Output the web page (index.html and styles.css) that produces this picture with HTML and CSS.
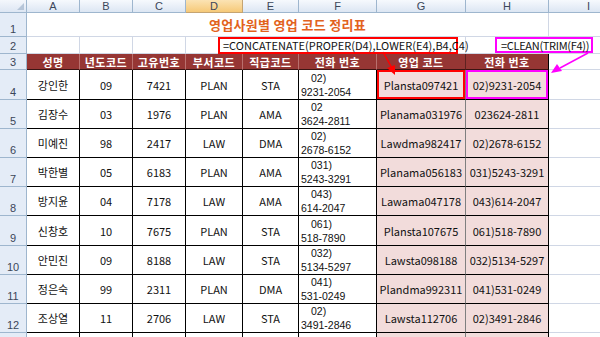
FILE: index.html
```html
<!DOCTYPE html>
<html>
<head>
	<title>영업사원별 영업 코드 정리표</title>
	<meta charset="utf-8">
	<link rel="stylesheet" href="styles.css">
</head>
<body>

	<div id="page">

		<div class="sheet">

			<!-- column headers -->
			<div class="corner"><span class="corner-tri"></span></div>
			<div class="colhead">A</div>
			<div class="colhead">B</div>
			<div class="colhead">C</div>
			<div class="colhead sel">D</div>
			<div class="colhead">E</div>
			<div class="colhead">F</div>
			<div class="colhead">G</div>
			<div class="colhead">H</div>
			<div class="colhead">I</div>

			<!-- row 1 -->
			<div class="rowhead">1</div>
			<div class="title">영업사원별 영업 코드 정리표</div>
			<div class="cell"></div>

			<!-- row 2 -->
			<div class="rowhead">2</div>
			<div class="cell"></div>
			<div class="cell"></div>
			<div class="cell"></div>
			<div class="cell"></div>
			<div class="cell"></div>
			<div class="cell"></div>
			<div class="cell"></div>
			<div class="cell"></div>
			<div class="cell"></div>

			<!-- row 3 -->
			<div class="rowhead">3</div>
			<div class="th">성명</div>
			<div class="th">년도코드</div>
			<div class="th">고유번호</div>
			<div class="th">부서코드</div>
			<div class="th">직급코드</div>
			<div class="th">전화 번호</div>
			<div class="th th-g">영업 코드</div>
			<div class="th th-last">전화 번호</div>
			<div class="cell"></div>

			<!-- row 4 -->
			<div class="rowhead">4</div>
			<div class="td">강인한</div>
			<div class="td">09</div>
			<div class="td">7421</div>
			<div class="td">PLAN</div>
			<div class="td">STA</div>
			<div class="td tel"><span class="area">02)</span><span>9231-2054</span></div>
			<div class="td code hl-red">Plansta097421</div>
			<div class="td code code-h hl-pink">02)9231-2054</div>
			<div class="cell"></div>

			<!-- row 5 -->
			<div class="rowhead">5</div>
			<div class="td">김장수</div>
			<div class="td">03</div>
			<div class="td">1976</div>
			<div class="td">PLAN</div>
			<div class="td">AMA</div>
			<div class="td tel"><span class="area">02</span><span>3624-2811</span></div>
			<div class="td code">Planama031976</div>
			<div class="td code code-h">023624-2811</div>
			<div class="cell"></div>

			<!-- row 6 -->
			<div class="rowhead">6</div>
			<div class="td">미예진</div>
			<div class="td">98</div>
			<div class="td">2417</div>
			<div class="td">LAW</div>
			<div class="td">DMA</div>
			<div class="td tel"><span class="area">02)</span><span>2678-6152</span></div>
			<div class="td code">Lawdma982417</div>
			<div class="td code code-h">02)2678-6152</div>
			<div class="cell"></div>

			<!-- row 7 -->
			<div class="rowhead">7</div>
			<div class="td">박한별</div>
			<div class="td">05</div>
			<div class="td">6183</div>
			<div class="td">PLAN</div>
			<div class="td">AMA</div>
			<div class="td tel"><span class="area">031)</span><span>5243-3291</span></div>
			<div class="td code">Planama056183</div>
			<div class="td code code-h">031)5243-3291</div>
			<div class="cell"></div>

			<!-- row 8 -->
			<div class="rowhead">8</div>
			<div class="td">방지윤</div>
			<div class="td">04</div>
			<div class="td">7178</div>
			<div class="td">LAW</div>
			<div class="td">AMA</div>
			<div class="td tel"><span class="area">043)</span><span>614-2047</span></div>
			<div class="td code">Lawama047178</div>
			<div class="td code code-h">043)614-2047</div>
			<div class="cell"></div>

			<!-- row 9 -->
			<div class="rowhead">9</div>
			<div class="td">신창호</div>
			<div class="td">10</div>
			<div class="td">7675</div>
			<div class="td">PLAN</div>
			<div class="td">STA</div>
			<div class="td tel"><span class="area">061)</span><span>518-7890</span></div>
			<div class="td code">Plansta107675</div>
			<div class="td code code-h">061)518-7890</div>
			<div class="cell"></div>

			<!-- row 10 -->
			<div class="rowhead">10</div>
			<div class="td">안민진</div>
			<div class="td">09</div>
			<div class="td">8188</div>
			<div class="td">LAW</div>
			<div class="td">STA</div>
			<div class="td tel"><span class="area">032)</span><span>5134-5297</span></div>
			<div class="td code">Lawsta098188</div>
			<div class="td code code-h">032)5134-5297</div>
			<div class="cell"></div>

			<!-- row 11 -->
			<div class="rowhead">11</div>
			<div class="td">정은숙</div>
			<div class="td">99</div>
			<div class="td">2311</div>
			<div class="td">PLAN</div>
			<div class="td">DMA</div>
			<div class="td tel"><span class="area">041)</span><span>531-0249</span></div>
			<div class="td code">Plandma992311</div>
			<div class="td code code-h">041)531-0249</div>
			<div class="cell"></div>

			<!-- row 12 -->
			<div class="rowhead">12</div>
			<div class="td">조상열</div>
			<div class="td">11</div>
			<div class="td">2706</div>
			<div class="td">LAW</div>
			<div class="td">STA</div>
			<div class="td tel"><span class="area">02)</span><span>3491-2846</span></div>
			<div class="td code">Lawsta112706</div>
			<div class="td code code-h">02)3491-2846</div>
			<div class="cell"></div>

			<!-- row 13, only its top edge shows -->
			<div class="rowhead"></div>
			<div class="td"></div>
			<div class="td"></div>
			<div class="td"></div>
			<div class="td"></div>
			<div class="td"></div>
			<div class="td"></div>
			<div class="td code"></div>
			<div class="td code code-h"></div>
			<div class="cell"></div>

		</div>

		<!-- text boxes and arrows drawn over the sheet -->
		<div class="note note-red">=CONCATENATE(PROPER(D4),LOWER(E4),B4,C4)</div>
		<div class="note note-pink">=CLEAN(TRIM(F4))</div>

		<svg class="arrows" width="600" height="337" viewBox="0 0 600 337">
			<line x1="383" y1="52" x2="392" y2="68" stroke="#ff0000" stroke-width="1.5"/>
			<polygon points="395,75 387,68 395,65" fill="#ff0000"/>
			<line x1="588" y1="53" x2="560" y2="68" stroke="#ff00ff" stroke-width="1.5"/>
			<polygon points="551,73 557,64 562,71" fill="#ff00ff"/>
		</svg>

	</div>

</body>
</html>
```

FILE: styles.css
```css
* {
	margin: 0;
	padding: 0;
}

body {
	overflow: hidden;
	background-color: white;
	font-family: "Noto Sans CJK KR", "Noto Sans", sans-serif;
	font-size: 11px;
	color: #111111;
}

#page {
	position: relative;
	width: 600px;
	height: 337px;
	overflow: hidden;
}




	.sheet {
		display: grid;
		grid-template-columns: 27px 53px 53px 53px 57px 56px 78px 89px 83px 80px;
		grid-template-rows: 13px 24px 17px 16px 30px 29px 29px 29px 29px 30px 29px 29px 29px 29px;
		width: 629px;
	}

		.sheet > div {
			box-sizing: border-box;
			display: flex;
			align-items: center;
			justify-content: center;
			border-right: 1px solid #d0d7e5;
			border-bottom: 1px solid #d0d7e5;
			white-space: nowrap;
			overflow: hidden;
			line-height: 14px;
		}

		.sheet > .corner {
			position: relative;
			background: linear-gradient(#f4f7fc, #dde6f3);
			border-color: #9eb6ce;
		}

			.corner-tri {
				position: absolute;
				right: 2px;
				bottom: 2px;
				width: 0;
				height: 0;
				border-left: 7px solid transparent;
				border-bottom: 7px solid #b6c5d8;
			}

		.sheet > .colhead {
			background: linear-gradient(#f6f9fd, #dce6f3);
			border-color: #9eb6ce;
			color: #3b4659;
			font-family: "Liberation Sans", sans-serif;
			font-size: 11px;
			line-height: 12px;
		}

		.sheet > .colhead.sel {
			background: linear-gradient(#fbe3b4, #f6c978);
			border-color: #c5a472;
		}

		.sheet > .rowhead {
			align-items: flex-end;
			background-color: #e4ecf7;
			border-color: #9eb6ce;
			color: #3b4659;
			font-family: "Liberation Sans", sans-serif;
			font-size: 11px;
			line-height: 12px;
			padding-bottom: 1px;
		}

		.sheet > .title {
			grid-column: span 8;
			color: #e2621d;
			font-size: 13px;
			font-weight: bold;
			letter-spacing: 0.3px;
			padding-top: 1px;
		}

		.sheet > .th {
			background-color: #963634;
			color: white;
			font-weight: bold;
			border-right-color: #b9706e;
			border-bottom-color: #3a1413;
			letter-spacing: 0.5px;
		}

		.sheet > .th-g {
			border-right-color: #5e2221;
		}

		.sheet > .th-last {
			border-right-color: #000000;
		}

		.sheet > .td {
			border-right-color: #000000;
			border-bottom-color: #000000;
		}

		.sheet > .tel {
			flex-direction: column;
			align-items: flex-start;
			justify-content: center;
			font-family: "Liberation Sans", sans-serif;
			font-size: 10.5px;
			line-height: 14px;
			padding-left: 2px;
		}

			.area {
				padding-left: 10px;
			}

		.sheet > .code {
			background-color: #f2dcdb;
			border-right-color: #7f7f7f;
		}

		.sheet > .code-h {
			border-right-color: #000000;
		}

		.sheet > .hl-red {
			box-shadow: inset 0 0 0 2px #ff0000;
		}

		.sheet > .hl-pink {
			box-shadow: inset 0 0 0 2px #ff00ff;
		}




	.note {
		position: absolute;
		box-sizing: border-box;
		background-color: white;
		white-space: nowrap;
		line-height: 12px;
		color: #111111;
		padding: 0 0 0 3px;
	}

	.note-red {
		left: 218px;
		top: 37px;
		width: 240px;
		height: 17px;
		border: 2px solid #ff0000;
	}

	.note-pink {
		left: 495px;
		top: 37px;
		width: 98px;
		height: 16px;
		border: 2px solid #ff00ff;
		padding-left: 4px;
		letter-spacing: -0.3px;
	}

	.arrows {
		position: absolute;
		left: 0;
		top: 0;
		pointer-events: none;
	}
```
